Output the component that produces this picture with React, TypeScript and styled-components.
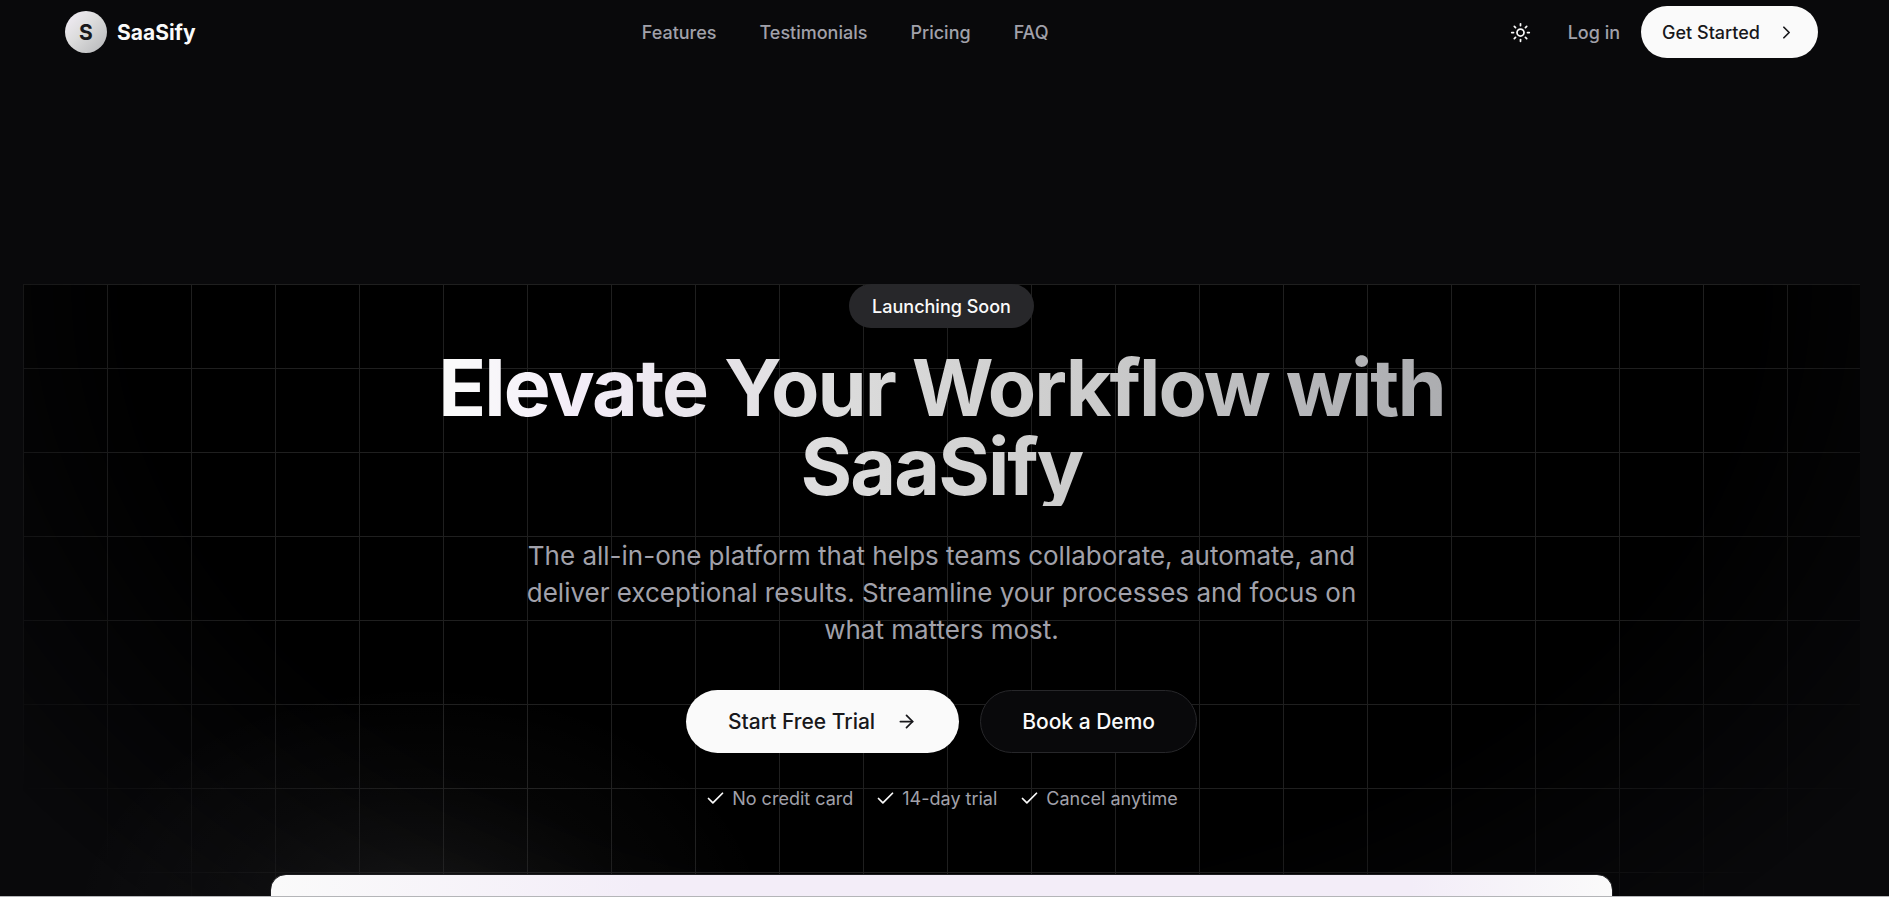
import React from "react";
import styled, { createGlobalStyle, css } from "styled-components";
import { ArrowRight, Check, ChevronRight, Sun } from "lucide-react";

const GlobalStyle = createGlobalStyle`
  *, *::before, *::after { box-sizing: border-box; }
  html, body, #root { height: 100%; }
  body {
    margin: 0;
    overflow: hidden;
    background: #09090b;
    color: #fafafa;
    font-family: Inter, "Liberation Sans", sans-serif;
    font-size: 18px;
    line-height: 27px;
  }
`;

const Page = styled.div`
  display: flex;
  flex-direction: column;
  height: 100%;
  padding: 0 29px 0 23px;
  border-bottom: 1px solid #b4b5b8;
  overflow: hidden;
`;

const Header = styled.header`
  display: flex;
  align-items: center;
  justify-content: space-between;
  flex: none;
  height: 64px;
  padding: 0 42px;
`;

const Brand = styled.a`
  display: flex;
  align-items: center;
  gap: 10px;
  color: inherit;
  font-size: 21px;
  font-weight: 700;
  text-decoration: none;
`;

const BrandMark = styled.span`
  display: grid;
  place-items: center;
  width: 42px;
  height: 42px;
  border-radius: 50%;
  background: linear-gradient(135deg, #f4eff8, #dcdcdc 45%, #b4b5b8);
  color: #18181b;
`;

const Nav = styled.nav`
  display: flex;
  gap: 43px;
`;

const TextLink = styled.a`
  color: #a1a1aa;
  font-weight: 500;
  text-decoration: none;
`;

const Actions = styled.div`
  display: flex;
  align-items: center;
  gap: 21px;
`;

const IconButton = styled.button`
  display: grid;
  place-items: center;
  width: 52px;
  height: 52px;
  padding: 0;
  border: 0;
  border-radius: 50%;
  background: transparent;
  color: #fafafa;
`;

const Button = styled.button<{ $size: "md" | "lg"; $outline?: boolean }>`
  display: inline-flex;
  align-items: center;
  border: 0;
  border-radius: 32px;
  background: #fafafa;
  color: #18181b;
  font: inherit;
  font-weight: 500;
  ${({ $size }) =>
    $size === "lg"
      ? css`
          gap: 21px;
          height: 63px;
          padding: 0 42px;
          font-size: 21px;
        `
      : css`
          gap: 16px;
          height: 52px;
          padding: 0 21px;
        `}
  ${({ $outline }) =>
    $outline &&
    css`
      padding: 0 41px;
      border: 1px solid #27272a;
      background: #09090b;
      color: #fafafa;
    `}
`;

const Hero = styled.section`
  position: relative;
  isolation: isolate;
  display: flex;
  flex: none;
  flex-direction: column;
  align-items: center;
  margin-top: 220px;
  text-align: center;
`;

const GridBackdrop = styled.div`
  position: absolute;
  inset: 0;
  z-index: -2;
  background-color: #000;
  background-image: linear-gradient(to right, #1f1f1f 1px, transparent 1px),
    linear-gradient(to bottom, #1f1f1f 1px, transparent 1px);
  background-size: 84px 84px;
  mask-image: radial-gradient(ellipse 60% 816px at 50% 0%, #000 72%, transparent 104%);
`;

const Badge = styled.span`
  height: 44px;
  padding: 9px 23px;
  border-radius: 22px;
  background: #27272a;
  font-weight: 500;
`;

const Title = styled.h1`
  max-width: 1050px;
  margin: 20px 0 31px;
  background: linear-gradient(to right, #fafafa 4%, #f3edf8 15%, #dcdcdc 40%, #cbcbcb 65%, #b4b5b8 86%, #abacaf);
  background-clip: text;
  color: transparent;
  font-size: 79px;
  font-weight: 700;
  line-height: 79px;
  letter-spacing: -0.025em;
`;

const Lead = styled.p`
  max-width: 882px;
  margin: 0;
  color: #a1a1aa;
  font-size: 26px;
  line-height: 37px;
`;

const Cta = styled.div`
  display: flex;
  gap: 21px;
  margin-top: 42px;
`;

const Perks = styled.ul`
  display: flex;
  gap: 22px;
  margin: 32px 0 0;
  padding: 0;
  list-style: none;
  color: #a1a1aa;
`;

const Perk = styled.li`
  display: flex;
  align-items: center;
  gap: 6px;

  svg {
    color: #fafafa;
  }
`;

const Preview = styled.div`
  position: relative;
  width: calc(100% - 494px);
  height: 600px;
  margin-top: 62px;
`;

const PreviewCard = styled.div`
  height: 100%;
  border: 1px solid #1c1c1f;
  border-radius: 16px;
  background: linear-gradient(to right, #fafafa, #f3edf8 28%, #f3edf8 85%, #fafafa);
`;

const Glow = styled.div`
  position: absolute;
  top: -190px;
  left: -200px;
  z-index: -1;
  width: 700px;
  height: 480px;
  background: radial-gradient(
    closest-side,
    rgba(250, 250, 250, 0.08),
    rgba(250, 250, 250, 0.04) 35%,
    rgba(250, 250, 250, 0.02) 60%,
    rgba(250, 250, 250, 0.01) 80%,
    transparent
  );
`;

const links = ["Features", "Testimonials", "Pricing", "FAQ"];
const perks = ["No credit card", "14-day trial", "Cancel anytime"];

export default function App() {
  return (
    <>
      <GlobalStyle />
      <Page>
        <Header>
          <Brand href="#">
            <BrandMark>S</BrandMark>
            SaaSify
          </Brand>
          <Nav>
            {links.map((label) => (
              <TextLink key={label} href={`#${label.toLowerCase()}`}>
                {label}
              </TextLink>
            ))}
          </Nav>
          <Actions>
            <IconButton type="button" aria-label="Toggle theme">
              <Sun size={21} />
            </IconButton>
            <TextLink href="#login">Log in</TextLink>
            <Button type="button" $size="md">
              Get Started
              <ChevronRight size={21} />
            </Button>
          </Actions>
        </Header>
        <Hero>
          <GridBackdrop />
          <Badge>Launching Soon</Badge>
          <Title>Elevate Your Workflow with SaaSify</Title>
          <Lead>
            The all-in-one platform that helps teams collaborate, automate, and deliver exceptional
            results. Streamline your processes and focus on what matters most.
          </Lead>
          <Cta>
            <Button type="button" $size="lg">
              Start Free Trial
              <ArrowRight size={21} />
            </Button>
            <Button type="button" $size="lg" $outline>
              Book a Demo
            </Button>
          </Cta>
          <Perks>
            {perks.map((perk) => (
              <Perk key={perk}>
                <Check size={21} />
                {perk}
              </Perk>
            ))}
          </Perks>
          <Preview>
            <Glow />
            <PreviewCard />
          </Preview>
        </Hero>
      </Page>
    </>
  );
}
